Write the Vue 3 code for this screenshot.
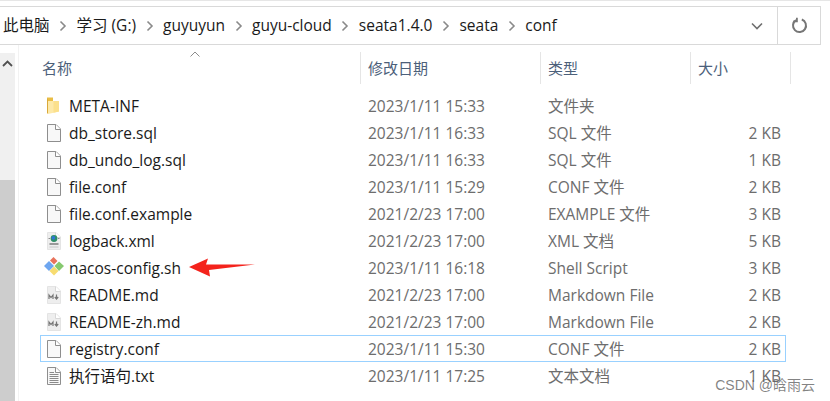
<template>
  <div class="explorer">
    <div class="address-row">
      <div class="breadcrumb">
        <div class="crumbs">
          <template v-for="(c, i) in crumbs" :key="c">
            <span class="crumb">{{ c }}</span>
            <svg v-if="i < crumbs.length - 1" class="sep" width="8" height="12" viewBox="0 0 8 12" fill="none">
              <path d="M1.5 1.5L6 6L1.5 10.5" stroke="#8a8a8a" stroke-width="1.6"/>
            </svg>
          </template>
        </div>
        <svg class="chevron" width="12" height="8" viewBox="0 0 12 8" fill="none">
          <path d="M1 1.5L6 6.5L11 1.5" stroke="#6f6f6f" stroke-width="1.6"/>
        </svg>
        <div class="refresh">
          <svg width="17" height="17" viewBox="0 0 17 17" fill="none">
            <path d="M5 3.100A6.500 6.500 0 1 0 10.800 2.500" stroke="#767676" stroke-width="2"/>
            <path d="M5.900 0.800V4.400H2.300" stroke="#767676" stroke-width="1.800"/>
          </svg>
        </div>
      </div>
    </div>

    <div class="body">
      <aside class="scrollbar">
        <svg class="up" width="11" height="7" viewBox="0 0 11 7" fill="none">
          <path d="M1 6L5.5 1.5L10 6" stroke="#505050" stroke-width="1.8"/>
        </svg>
        <div class="thumb"></div>
      </aside>

      <main class="list">
        <div class="head">
          <div class="col-head">名称
            <svg class="sort" width="10" height="6" viewBox="0 0 10 6" fill="none">
              <path d="M0.5 5.5L5 1L9.5 5.5" stroke="#8c8c8c"/>
            </svg>
          </div>
          <div class="col-head">修改日期</div>
          <div class="col-head">类型</div>
          <div class="col-head last">大小</div>
        </div>

        <div class="rows">
          <div v-for="f in files" :key="f.name" class="row" :class="{ selected: f.selected }">
            <div class="name">
              <svg class="icon" width="18" height="18" viewBox="0 0 18 18" fill="none">
                <template v-if="f.icon === 'folder'">
                  <path d="M2 0.500H8V13H2Z" fill="#e9bd45"/>
                  <path d="M2 1.500L3 2.500V17L2 16Z" fill="#d9a93a"/>
                  <path d="M3 4H14V14.500L3 17Z" fill="#fde9a8"/>
                  <path d="M8.500 4H14V14.500L8.500 15.700Z" fill="#fbe08c"/>
                </template>
                <template v-else-if="f.icon === 'git'">
                  <path d="M-1 7L4 2L9 7L4 12Z" fill="#6ea6f0"/>
                  <path d="M5 1.500L8.500 -2L12.500 2L9 5.500Z" fill="#e8735c"/>
                  <path d="M9.500 7L14 2.500L19 7L14 12Z" fill="#86c96f"/>
                  <path d="M4.500 12L9 7.500L13.500 12L9 16.500Z" fill="#f7dc70"/>
                </template>
                <template v-else>
                  <path d="M2.500 .5H11L15.500 5V17.500H2.500Z" :fill="soft(f) ? '#eeeeee' : '#f8f8f8'" :stroke="soft(f) ? '#e4e4e4' : '#8e8e8e'"/>
                  <path d="M10.500 .5V5.500H15.500" fill="#fff" :stroke="soft(f) ? '#d8d8d8' : '#8e8e8e'"/>
                  <template v-if="f.icon === 'txt'">
                    <path d="M4.500 5.500H9M4.500 7.500H13.500M4.500 9.500H13.500M4.500 11.500H13.500M4.500 13.500H13.500M4.500 15.500H13.500" stroke="#8a8a8a"/>
                  </template>
                  <template v-if="f.icon === 'xml'">
                    <circle cx="9" cy="6.500" r="3.400" fill="#2f8f68"/>
                    <circle cx="8.400" cy="5.900" r="1.800" fill="#2f74d8"/>
                    <path d="M3.500 6.500H5M13 6.500H14.500" stroke="#8a8a8a"/>
                    <path d="M4.500 12H13.500" stroke="#999" stroke-width="2"/>
                    <path d="M4.500 15H13.500" stroke="#c4c4c4"/>
                  </template>
                  <template v-if="f.icon === 'md'">
                    <path d="M4 13V9L6 11.500L8 9V13" stroke="#777" stroke-width="1.200"/>
                    <path d="M11.500 8.500V12.500M9.800 11L11.500 13L13.200 11" stroke="#777" stroke-width="1.200"/>
                  </template>
                </template>
              </svg>
              <span class="fname">{{ f.name }}</span>
            </div>
            <div class="cell">{{ f.date }}</div>
            <div class="cell">{{ f.type }}</div>
            <div class="cell size">{{ f.size }}</div>
          </div>
        </div>
      </main>
    </div>

    <svg class="annot" width="68" height="20" viewBox="0 0 68 20">
      <path d="M0 9L19 0.500L17 6.500L66 6.500L20 12L21 18.500Z" fill="#f4231c"/>
    </svg>
    <div class="watermark">CSDN @晗雨云</div>
  </div>
</template>

<script setup>
const crumbs = ['此电脑', '学习 (G:)', 'guyuyun', 'guyu-cloud', 'seata1.4.0', 'seata', 'conf']

const files = [
  { name: 'META-INF', date: '2023/1/11 15:33', type: '文件夹', size: '', icon: 'folder' },
  { name: 'db_store.sql', date: '2023/1/11 16:33', type: 'SQL 文件', size: '2 KB', icon: 'file' },
  { name: 'db_undo_log.sql', date: '2023/1/11 16:33', type: 'SQL 文件', size: '1 KB', icon: 'file' },
  { name: 'file.conf', date: '2023/1/11 15:29', type: 'CONF 文件', size: '2 KB', icon: 'file' },
  { name: 'file.conf.example', date: '2021/2/23 17:00', type: 'EXAMPLE 文件', size: '3 KB', icon: 'file' },
  { name: 'logback.xml', date: '2021/2/23 17:00', type: 'XML 文档', size: '5 KB', icon: 'xml' },
  { name: 'nacos-config.sh', date: '2023/1/11 16:18', type: 'Shell Script', size: '3 KB', icon: 'git' },
  { name: 'README.md', date: '2021/2/23 17:00', type: 'Markdown File', size: '2 KB', icon: 'md' },
  { name: 'README-zh.md', date: '2021/2/23 17:00', type: 'Markdown File', size: '2 KB', icon: 'md' },
  { name: 'registry.conf', date: '2023/1/11 15:30', type: 'CONF 文件', size: '2 KB', icon: 'file', selected: true },
  { name: '执行语句.txt', date: '2023/1/11 17:25', type: '文本文档', size: '1 KB', icon: 'txt' },
]

function soft(f) {
  return f.icon === 'md' || f.icon === 'xml'
}
</script>

<style>
html, body {
  margin: 0;
  background: #fff;
  overflow: hidden;
}
</style>

<style scoped>
.explorer {
  position: relative;
  width: 830px;
  height: 401px;
  overflow: hidden;
  background: #fff;
  border-top: 1px solid #e6e6e6;
  box-sizing: border-box;
  font-family: "Open Sans", "Noto Sans CJK SC", sans-serif;
  font-size: 15.5px;
  color: #1a1a1a;
}

.address-row {
  padding: 5px 9px 0 0;
}

.breadcrumb {
  display: flex;
  align-items: center;
  height: 39px;
  box-sizing: border-box;
  border: 1px solid #d9d9d9;
  border-left: 0;
}

.crumbs {
  flex: 1;
  display: flex;
  align-items: center;
  padding: 0 0 2px 3px;
}

.crumb {
  color: #1a1a1a;
}

.sep {
  margin: 2px 9.5px 0 9.5px;
}

.chevron {
  margin-right: 14px;
}

.refresh {
  width: 42px;
  height: 37px;
  border-left: 1px solid #d9d9d9;
  display: flex;
  align-items: center;
  justify-content: center;
}

.body {
  display: flex;
  height: 356px;
}

.scrollbar {
  width: 15px;
  background: #f0f0f0;
  margin-top: 8px;
  display: flex;
  flex-direction: column;
  align-items: center;
  flex: none;
}

.up {
  margin-top: 7px;
}

.thumb {
  align-self: stretch;
  margin-top: 113px;
  flex: 1;
  background: #cdcdcd;
}

.list {
  flex: 1;
  margin-left: 3px;
  border-left: 1px solid #f2f2f2;
  padding-left: 21px;
}

.head {
  display: grid;
  grid-template-columns: 321px 180px 150px 100px;
  height: 32px;
  margin-top: 7px;
}

.col-head {
  position: relative;
  display: flex;
  align-items: center;
  padding: 0 0 2px 7px;
  height: 32px;
  color: #4c607a;
  font-size: 15px;
  border-right: 1px solid #e5e5e5;
  box-sizing: border-box;
}

.col-head:first-child {
  padding-left: 2px;
}

.sort {
  position: absolute;
  top: -1px;
  left: 150px;
}

.rows {
  margin-top: 8px;
}

.row {
  display: grid;
  grid-template-columns: 320px 180px 150px 94px;
  height: 27px;
  box-sizing: border-box;
  align-items: center;
  border: 1px solid transparent;
  width: 746px;
}

.row.selected {
  border-color: #99d1ff;
}

.name {
  display: flex;
  align-items: center;
}

.icon {
  margin-left: 4px;
  flex: none;
  overflow: visible;
}

.fname {
  margin-left: 6px;
  white-space: nowrap;
}

.cell {
  padding-left: 7px;
  color: #6d6d6d;
  white-space: nowrap;
}

.size {
  padding: 0 4px 0 0;
  text-align: right;
}

.annot {
  position: absolute;
  left: 189px;
  top: 257px;
}

.watermark {
  position: absolute;
  right: 15px;
  bottom: 7px;
  font-family: "Liberation Sans", "Noto Sans CJK SC", sans-serif;
  font-size: 14px;
  color: rgba(90, 90, 90, 0.75);
}
</style>
